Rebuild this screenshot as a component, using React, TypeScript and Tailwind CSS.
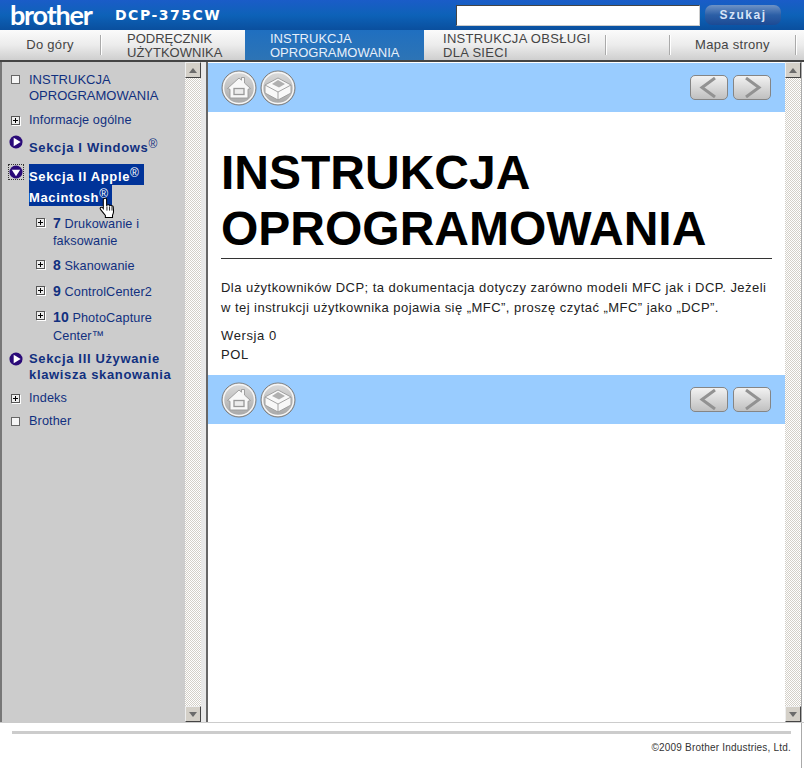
const font = "font-['Liberation_Sans',Arial,sans-serif]";

function Plus() {
  return (
    <span className="flex w-[9px] h-[9px] border border-[#555] bg-[#eee] items-center justify-center shrink-0 shadow-[1px_1px_0_#fff]">
      <svg width="7" height="7" viewBox="0 0 7 7"><path d="M3.5 1v5M1 3.5h5" stroke="#000" strokeWidth="1" /></svg>
    </span>
  );
}
function Square() {
  return <span className="block w-[9px] h-[9px] border border-[#666] bg-[#f5f5f5] shrink-0" />;
}
function Play({ down }: { down?: boolean }) {
  return (
    <svg width="14" height="14" viewBox="0 0 15 15" className={down ? "shrink-0 ml-[1px] mt-[1px] outline-1 outline-dotted outline-[#333]" : "shrink-0 ml-[1px] mt-[1px]"}>
      <circle cx="7.5" cy="7.5" r="7" fill="#2a0a78" />
      {down ? <path d="M3 5h9l-4.500 7z" fill="#fff" /> : <path d="M5 3l7.500 4.500L5 12z" fill="#fff" />}
    </svg>
  );
}
function Reg() {
  return <span className="text-[12px] font-normal align-[4px] leading-none">®</span>;
}
function Hand() {
  return (
    <svg width="18" height="22" viewBox="0 0 17 21" className="absolute left-[99px] top-[197px]">
      <path d="M5 1.500c1-.8 2.200-.3 2.200 1V8l1-.5c.7-.3 1.500 0 1.700.5.700-.4 1.500-.2 1.800.5.800-.3 1.700.2 1.800 1l.3 4c.1 1.500-.4 2.800-1 4v2H6v-2L1.500 12c-.8-1-.5-2 .3-2.200.7-.2 1.500.2 2.200 1.200V2.500c0-.4.400-.8 1-1z" fill="#fff" stroke="#000" strokeWidth="1" />
      <path d="M7.500 9v4M10 9v4M12.300 9.500V13" stroke="#000" strokeWidth=".8" />
    </svg>
  );
}

function ScrollBtn({ down }: { down?: boolean }) {
  return (
    <div className="w-4 h-4 shrink-0 bg-[#d4d0c8] border border-t-[#eee] border-l-[#eee] border-r-[#444] border-b-[#444] flex items-center justify-center">
      <svg width="8" height="5" viewBox="0 0 8 5">
        <path d={down ? "M0 0h8L4 5z" : "M4 0l4 5H0z"} fill="#6b6b6b" />
      </svg>
    </div>
  );
}
function Scrollbar() {
  return (
    <div className="w-4 shrink-0 flex flex-col bg-[repeating-conic-gradient(#d4d0c8_0_25%,#ffffff_0_50%)] bg-[length:2px_2px]">
      <ScrollBtn />
      <div className="flex-1" />
      <ScrollBtn down />
    </div>
  );
}

function HomeIcon() {
  return (
    <svg width="36" height="36" viewBox="0 0 36 36">
      <defs>
        <linearGradient id="gb" x1="0" y1="0" x2="0" y2="1"><stop offset="0" stopColor="#dcdcdc" /><stop offset="1" stopColor="#a6a6a6" /></linearGradient>
      </defs>
      <circle cx="18" cy="18" r="17" fill="url(#gb)" stroke="#7d7d7d" strokeWidth="1" />
      <circle cx="18" cy="18" r="15.500" fill="none" stroke="#f6f6f6" strokeWidth="1.400" />
      <path d="M6.500 18.500L18 8l2.500 2.200V7.500h3V13l6 5.500-2.500.8V28H9v-8.700z" fill="#f8f8f8" stroke="#999" strokeWidth=".9" />
      <rect x="13" y="18.500" width="10" height="6" fill="#ececec" stroke="#999" strokeWidth="1.300" />
    </svg>
  );
}
function BoxIcon() {
  return (
    <svg width="36" height="36" viewBox="0 0 36 36">
      <circle cx="18" cy="18" r="17" fill="url(#gb)" stroke="#7d7d7d" strokeWidth="1" />
      <circle cx="18" cy="18" r="15.500" fill="none" stroke="#f6f6f6" strokeWidth="1.400" />
      <path d="M5 15l13-7 13 7v8l-13 7-13-7z" fill="#f8f8f8" stroke="#999" strokeWidth=".9" />
      <path d="M5 15l13 7 13-7M18 22v8" fill="none" stroke="#999" strokeWidth=".9" />
      <path d="M12 14l6-4 7 4-6 3.500z" fill="#b0b0b0" />
    </svg>
  );
}
function Arrow({ right }: { right?: boolean }) {
  return (
    <div className="w-[38px] h-[25px] rounded-[5px] border border-[#858585] bg-gradient-to-b from-[#f2f2f2] to-[#c0c0c0] flex items-center justify-center">
      <svg width="20" height="21" viewBox="0 0 20 21">
        <path d={right ? "M4 1l13 9.500L4 20" : "M16 1L3 10.500 16 20"} fill="none" stroke="#929292" strokeWidth="3" />
      </svg>
    </div>
  );
}
function Band() {
  return (
    <div className="h-[49px] bg-[#99ccff] flex items-center justify-between pl-[13px] pr-[14px]">
      <div className="flex gap-[3px]"><HomeIcon /><BoxIcon /></div>
      <div className="flex gap-[5px]"><Arrow /><Arrow right /></div>
    </div>
  );
}

function NavSep() {
  return <span className="block self-center w-px h-[20px] bg-[#aaa] shadow-[1px_0_0_#fff] shrink-0" />;
}

const navText = "text-[13px] leading-[14px] pt-[2px] text-[#444]";
const sectionText = "font-bold text-[13px] tracking-[0.65px]";
const plainText = "text-[12.7px] tracking-[0.1px]";

export default function App() {
  return (
    <div className={`${font} w-[804px] h-[768px] bg-white flex flex-col overflow-hidden relative`}>
      {/* header */}
      <div className="h-[30px] shrink-0 bg-gradient-to-b from-[#1a5cc8] via-[#0d62b8] to-[#0a4f9e] flex items-center justify-between pl-[10px] pr-[23px]">
        <div className="flex items-center">
          <span className="text-white text-[27px] leading-[30px] font-bold tracking-[-1.2px] w-[105px] font-['Lato',sans-serif]">brother</span>
          <span className="text-white text-[14px] font-bold tracking-[1.5px] font-['DejaVu_Sans',sans-serif]">DCP-375CW</span>
        </div>
        <div className="flex items-center gap-[5px]">
          <div className="w-[244px] h-[21px] bg-white border border-t-[#444] border-l-[#444] border-r-[#ccc] border-b-[#ccc]" />
          <div className="w-[76px] h-[20px] rounded-[7px] bg-gradient-to-b from-[#6f93c6] via-[#2c5fa6] to-[#1c4a94] flex items-center justify-center text-[#d7e4f7] text-[12px] font-bold tracking-[1.5px]">Szukaj</div>
        </div>
      </div>

      {/* nav */}
      <div className="h-[32px] shrink-0 flex items-stretch bg-gradient-to-b from-[#fbfbfb] via-[#ececec] to-[#cfcfcf] border-b-2 border-[#444]">
        <div className="w-[100px] flex items-center justify-center text-[13px] tracking-[0.3px] text-[#444]">Do góry</div>
        <NavSep />
        <div className={`w-[144px] pl-[26px] flex items-center ${navText}`}><span>PODRĘCZNIK<br />UŻYTKOWNIKA</span></div>
        <div className={`w-[179px] pl-[25px] flex items-center bg-gradient-to-b from-[#1f6fc0] to-[#2d74b5] ${navText} text-[#e6effa]`}><span>INSTRUKCJA<br />OPROGRAMOWANIA</span></div>
        <div className={`w-[181px] pl-[19px] flex items-center tracking-[0.3px] ${navText}`}><span>INSTRUKCJA OBSŁUGI<br />DLA SIECI</span></div>
        <NavSep />
        <div className="w-[63px]" />
        <NavSep />
        <div className="w-[125px] flex items-center justify-center text-[13px] tracking-[0.3px] text-[#444]">Mapa strony</div>
        <NavSep />
      </div>

      {/* body */}
      <div className="flex-1 min-h-0 flex border-b border-[#ccc]">
        <div className="w-[2px] bg-[#777] shrink-0" />
        <div className="w-[183px] shrink-0 bg-[#cccccc] pt-[10px] text-[#11307f] text-[13px] leading-[16px]">
          <div className="flex gap-[9px] pl-[9px]">
            <span className="mt-[3px]"><Square /></span>
            <span>INSTRUKCJA<br />OPROGRAMOWANIA</span>
          </div>
          <div className="flex gap-[9px] pl-[9px] mt-[8px] items-center">
            <Plus /><span className={plainText}>Informacje ogólne</span>
          </div>
          <div className="flex gap-[6px] pl-[6px] mt-[6px]">
            <Play />
            <span className={`${sectionText} leading-[17px] pt-[4px]`}>Sekcja I Windows<Reg /></span>
          </div>
          <div className="flex gap-[6px] pl-[6px] mt-[8px]">
            <Play down />
            <div className={`${sectionText} flex flex-col items-start text-white`}>
              <span className="bg-[#003399] w-[115px] h-[21px] leading-[25px]">Sekcja II Apple<Reg /></span>
              <span className="bg-[#003399] pr-[3px] h-[21px] leading-[25px]">Macintosh<Reg /></span>
            </div>
          </div>
          <div className="flex gap-[8px] pl-[34px] mt-[9px]">
            <span className="mt-[3px]"><Plus /></span>
            <span className={`w-[100px] leading-[17px] ${plainText}`}><b className="text-[14px]">7</b> Drukowanie i faksowanie</span>
          </div>
          <div className="flex gap-[8px] pl-[34px] mt-[7px]">
            <span className="mt-[3px]"><Plus /></span>
            <span className={`leading-[17px] ${plainText}`}><b className="text-[14px]">8</b> Skanowanie</span>
          </div>
          <div className="flex gap-[8px] pl-[34px] mt-[8px]">
            <span className="mt-[3px]"><Plus /></span>
            <span className={`leading-[17px] ${plainText}`}><b className="text-[14px]">9</b> ControlCenter2</span>
          </div>
          <div className="flex gap-[8px] pl-[34px] mt-[7px]">
            <span className="mt-[3px]"><Plus /></span>
            <span className={`w-[110px] leading-[18px] ${plainText}`}><b className="text-[14px]">10</b> PhotoCapture Center™</span>
          </div>
          <div className="flex gap-[6px] pl-[6px] mt-[6px]">
            <Play />
            <span className={`${sectionText} leading-[16px]`}>Sekcja III Używanie<br />klawisza skanowania</span>
          </div>
          <div className="flex gap-[9px] pl-[9px] mt-[7px] items-center">
            <Plus /><span className={plainText}>Indeks</span>
          </div>
          <div className="flex gap-[9px] pl-[9px] mt-[7px] items-center">
            <Square /><span className={plainText}>Brother</span>
          </div>
        </div>
        <Scrollbar />
        <div className="w-[7px] shrink-0 bg-[#e8e8e8] border-r-2 border-[#666]" />
        <div className="w-[577px] shrink-0 bg-white flex flex-col pt-[1px]">
          <Band />
          <div className="pl-[13px] pr-[13px] text-black">
            <h1 className="font-bold text-[48px] leading-[56px] mt-[33px] border-b border-[#333] pb-[1px]">INSTRUKCJA OPROGRAMOWANIA</h1>
            <p className="text-[13px] leading-[20px] mt-[19px] tracking-[0.46px] text-[#222]">Dla użytkowników DCP; ta dokumentacja dotyczy zarówno modeli MFC jak i DCP. Jeżeli w tej instrukcji użytkownika pojawia się „MFC”, proszę czytać „MFC” jako „DCP”.</p>
            <p className="text-[13px] leading-[19px] mt-[8px] mb-[11px] tracking-[0.6px] text-[#222]">Wersja 0<br />POL</p>
          </div>
          <Band />
        </div>
        <Scrollbar />
        <div className="flex-1 border-l border-[#aaa]" />
      </div>

      {/* footer */}
      <div className="h-[45px] shrink-0 mr-[2px] border-r border-[#aaa] pl-[12px] pr-[10px] pt-[8px]">
        <div className="h-[3px] bg-[#cccccc]" />
        <div className="text-right text-[10px] tracking-[0.2px] text-[#333] mt-[6px]">©2009 Brother Industries, Ltd.</div>
      </div>
      <Hand />
    </div>
  );
}
